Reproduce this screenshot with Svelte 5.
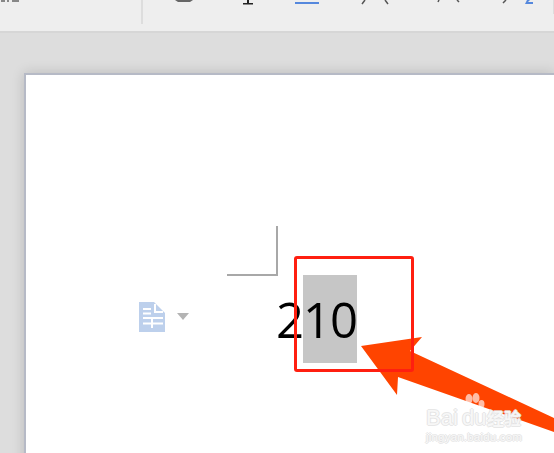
<script>
  // 文字水印上方的爪印
  const pawPads = [
    { cx: 8, cy: 7, rx: 3.5, ry: 5 },
    { cx: 15, cy: 6, rx: 3.5, ry: 5 },
    { cx: 20.5, cy: 12, rx: 3, ry: 4 }
  ];
</script>

<div class="window">
  <div class="toolbar">
    <!-- 工具栏图标只露出底部一点 -->
    <svg class="toolbar-bits" width="554" height="26" viewBox="0 0 554 26">
      <path d="M1 1H5M8 0V2M12 1H19" stroke="#666" stroke-width="1.5" fill="none" />
      <rect x="141" y="0" width="2" height="24" fill="#dddddd" />
      <path d="M175 0H193L190 2H178Z" fill="#666" />
      <path d="M243 3H253V4.5H243ZM247 0H249V3H247Z" fill="#222" />
      <rect x="295" y="2" width="24" height="2" fill="#5588dd" />
      <path d="M365 0L362 4M385 0L388 4M439 0L438 2M457 0L459 2M506 0L503 3" stroke="#555" stroke-width="1.5" fill="none" />
      <path d="M527 0H530L528 2H533V4H525Z" fill="#5588dd" />
      <rect x="553" y="0" width="1" height="14" fill="#dddddd" />
    </svg>
  </div>

  <div class="canvas">
    <div class="page">
      <div class="margin-mark"></div>

      <div class="line">
        <div class="doc-tag">
          <svg width="26" height="30" viewBox="0 0 26 30">
            <path d="M0 0H15L26 11V30H0Z" fill="#bdd0ec" />
            <path d="M16 2V10H24" fill="none" stroke="#fff" stroke-width="2" />
            <path d="M4 7H12M4 11.5H12M4 16H24M4 21.5H24M13 16V26" fill="none" stroke="#fff" stroke-width="2" />
          </svg>
          <span class="caret"></span>
        </div>
        <div class="page-num"><span class="digit">2</span><span class="sel">10</span></div>
      </div>
    </div>

    <svg class="arrow" width="193" height="97" viewBox="0 0 193 97">
      <path d="M0 10L61 1L49 15L193 82V96L37 41L36 59Z" fill="#ff4400" />
    </svg>

    <div class="red-box"></div>

    <div class="watermark">
      <svg class="paw" width="30" height="18" viewBox="0 0 30 18">
        <path d="M1 17C1 12 5 11 8 13C12 15 17 15 22 17" fill="none" stroke="#ffffff" stroke-opacity="0.7" stroke-width="1.5" />
        {#each pawPads as pad}
          <ellipse cx={pad.cx} cy={pad.cy} rx={pad.rx} ry={pad.ry} fill="#ffffff" opacity="0.65" />
        {/each}
      </svg>
      <div class="wm-top"><span class="wm-bai">Bai</span><span class="wm-du">du</span><span class="wm-cn">经验</span></div>
      <div class="wm-url">jingyan.baidu.com</div>
    </div>
  </div>
</div>

<style>
  :global(body) {
    margin: 0;
    overflow: hidden;
  }

  .window {
    width: 554px;
    height: 453px;
    overflow: hidden;
    display: flex;
    flex-direction: column;
    font-family: "Liberation Sans", "Noto Sans CJK SC", sans-serif;
    background: #dddddd;
  }

  .toolbar {
    height: 31px;
    flex: none;
    background: #eeeeee;
    border-bottom: 2px solid #d6d6d6;
    box-shadow: 0 1px 0 #f4f4f4;
  }

  .toolbar-bits {
    display: block;
  }

  .canvas {
    position: relative;
    flex: 1;
    padding: 40px 0 0 24px;
    background: #dddddd;
  }

  .page {
    height: 400px;
    background: #fff;
    border-top: 2px solid #b6bac6;
    border-left: 2px solid #b6bac6;
    box-shadow: 0 0 12px rgba(0, 0, 0, 0.16);
    padding: 151px 0 0 113px;
  }

  .margin-mark {
    width: 49px;
    height: 48px;
    margin-left: 88px;
    border-right: 2px solid #a8a8a8;
    border-bottom: 2px solid #a8a8a8;
  }

  .line {
    display: flex;
    align-items: center;
    height: 88px;
    margin-top: -1px;
  }

  .doc-tag {
    display: flex;
    align-items: center;
    gap: 12px;
    width: 137px;
    padding-bottom: 5px;
  }

  .caret {
    width: 0;
    height: 0;
    border-left: 6px solid transparent;
    border-right: 6px solid transparent;
    border-top: 7px solid #b4b4b4;
  }

  .page-num {
    display: flex;
    font-size: 49px;
    line-height: 88px;
    height: 88px;
    letter-spacing: -1px;
    color: #000;
    font-family: "Open Sans", "Liberation Sans", sans-serif;
  }

  .sel {
    background: #c6c6c6;
  }

  .red-box {
    position: absolute;
    left: 294px;
    top: 223px;
    width: 114px;
    height: 110px;
    border: 3px solid #ff1f10;
    border-radius: 3px;
  }

  .arrow {
    position: absolute;
    left: 361px;
    top: 303px;
  }

  .watermark {
    position: absolute;
    left: 426px;
    top: 359px;
    color: rgba(255, 255, 255, 0.75);
    text-shadow: 1px 0 0 rgba(225, 225, 225, 0.8), -1px 0 0 rgba(225, 225, 225, 0.8), 0 1px 0 rgba(225, 225, 225, 0.8), 0 -1px 0 rgba(225, 225, 225, 0.8);
  }

  .paw {
    display: block;
    margin: 0 0 -2px 35px;
  }

  .wm-top {
    display: flex;
    align-items: baseline;
    font-size: 22px;
    line-height: 20px;
    height: 20px;
  }

  .wm-bai {
    width: 36px;
  }

  .wm-du {
    width: 25px;
  }

  .wm-cn {
    font-size: 17px;
    font-weight: bold;
  }

  .wm-url {
    font-size: 11.5px;
    line-height: 14px;
    margin-top: 2px;
    letter-spacing: 0.2px;
  }
</style>
